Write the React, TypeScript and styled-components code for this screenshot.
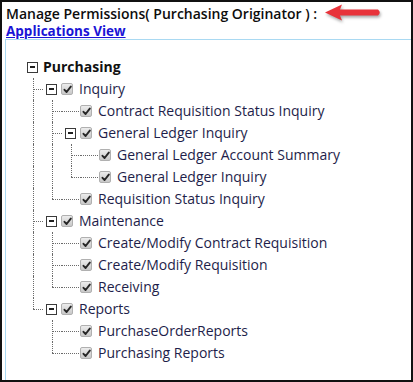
import React from "react";
import styled, { createGlobalStyle } from "styled-components";

const GlobalStyle = createGlobalStyle`
  html, body {
    margin: 0;
    padding: 0;
    background: #ffffff;
  }
  body {
    font-family: "Open Sans", "Noto Sans", Arial, sans-serif;
  }
`;

type TreeNode = {
  label: string;
  children?: TreeNode[];
};

type FlatRow = {
  node: TreeNode;
  guides: boolean[];
  connector: "tee" | "elbow" | null;
  isRoot: boolean;
};

const tree: TreeNode = {
  label: "Purchasing",
  children: [
    {
      label: "Inquiry",
      children: [
        { label: "Contract Requisition Status Inquiry" },
        {
          label: "General Ledger Inquiry",
          children: [
            { label: "General Ledger Account Summary" },
            { label: "General Ledger Inquiry" },
          ],
        },
        { label: "Requisition Status Inquiry" },
      ],
    },
    {
      label: "Maintenance",
      children: [
        { label: "Create/Modify Contract Requisition" },
        { label: "Create/Modify Requisition" },
        { label: "Receiving" },
      ],
    },
    {
      label: "Reports",
      children: [
        { label: "PurchaseOrderReports" },
        { label: "Purchasing Reports" },
      ],
    },
  ],
};

function flatten(root: TreeNode): FlatRow[] {
  const rows: FlatRow[] = [{ node: root, guides: [], connector: null, isRoot: true }];
  const walk = (node: TreeNode, guides: boolean[]) => {
    const kids = node.children ?? [];
    kids.forEach((kid, i) => {
      const last = i === kids.length - 1;
      rows.push({ node: kid, guides, connector: last ? "elbow" : "tee", isRoot: false });
      walk(kid, [...guides, !last]);
    });
  };
  walk(root, []);
  return rows;
}

const Frame = styled.div`
  width: 413px;
  height: 382px;
  box-sizing: border-box;
  border: 2px solid #111111;
  overflow: hidden;
  padding-top: 3px;
  display: flex;
  flex-direction: column;
  align-items: flex-start;
`;

const TitleRow = styled.div`
  display: flex;
  align-items: center;
  padding-left: 4px;
  height: 18px;
`;

const Title = styled.h1`
  margin: 0;
  font-size: 14px;
  font-weight: 600;
  color: #0d0d0d;
  line-height: 18px;
  white-space: nowrap;
`;

const Arrow = styled.svg`
  margin-left: 7px;
  margin-top: -2px;
  flex: none;
  filter: drop-shadow(1px 2px 1.5px rgba(0, 0, 0, 0.35));
`;

const AppLink = styled.a`
  display: block;
  margin-left: 4px;
  font-size: 13.5px;
  font-weight: 700;
  color: #1a14d6;
  text-decoration: underline;
  line-height: 16px;
  height: 16px;
`;

const Panel = styled.div`
  flex: none;
  margin-left: 3px;
  width: 440px;
  height: 400px;
  border: 1px solid #a9d9f2;
  padding: 16px 0 0 18px;
  box-sizing: border-box;
`;

const Row = styled.div`
  display: flex;
  align-items: center;
  height: 22px;
`;

const Cell = styled.span`
  position: relative;
  flex: none;
  width: 19px;
  height: 22px;
`;

const Guide = styled(Cell)<{ $line: boolean }>`
  &::before {
    content: "";
    display: ${(p) => (p.$line ? "block" : "none")};
    position: absolute;
    left: 9px;
    top: 0;
    height: 100%;
    border-left: 1px dotted #6b6b6b;
  }
`;

const Connector = styled(Cell)<{ $last: boolean }>`
  &::before {
    content: "";
    position: absolute;
    left: 9px;
    top: 0;
    height: ${(p) => (p.$last ? "11px" : "100%")};
    border-left: 1px dotted #6b6b6b;
  }
  &::after {
    content: "";
    position: absolute;
    left: 9px;
    right: 0;
    top: 11px;
    border-top: 1px dotted #6b6b6b;
  }
`;

const ExpanderSlot = styled.span`
  flex: none;
  width: 17px;
  height: 22px;
  display: flex;
  align-items: center;
`;

const Expander = styled.span`
  margin-left: 3px;
  width: 9px;
  height: 9px;
  border: 1px solid #3a3a3a;
  background: #ffffff;
  display: flex;
  align-items: center;
  justify-content: center;

  &::before {
    content: "";
    width: 5px;
    height: 2px;
    background: #1f1f1f;
  }
`;

const LeafStub = styled.span`
  position: relative;
  flex: none;
  width: 17px;
  height: 22px;

  &::after {
    content: "";
    position: absolute;
    left: 0;
    right: 0;
    top: 11px;
    border-top: 1px dotted #6b6b6b;
  }
`;

const CheckBox = styled.span`
  flex: none;
  margin-left: 1px;
  width: 10px;
  height: 10px;
  border: 1px solid #b0b0b0;
  border-radius: 2px;
  background: linear-gradient(#ececec, #c8c8c8);
  display: flex;
  align-items: center;
  justify-content: center;
`;

const Label = styled.span<{ $root: boolean }>`
  margin-left: ${(p) => (p.$root ? "2px" : "6px")};
  font-size: 14px;
  font-weight: ${(p) => (p.$root ? 700 : 400)};
  color: ${(p) => (p.$root ? "#111111" : "#1e1e4a")};
  white-space: nowrap;
  line-height: 22px;
`;

function Check() {
  return (
    <svg width="9" height="9" viewBox="0 0 9 9">
      <polyline
        points="1.5,4.8 3.6,7 7.8,1.6"
        fill="none"
        stroke="#262626"
        strokeWidth="1.9"
        strokeLinecap="round"
        strokeLinejoin="round"
      />
    </svg>
  );
}

export default function App() {
  const rows = flatten(tree);
  return (
    <>
      <GlobalStyle />
      <Frame>
        <TitleRow>
          <Title>Manage Permissions( Purchasing Originator ) :</Title>
          <Arrow width="58" height="20" viewBox="0 0 58 20">
            <path d="M1 9.5 L18 1.5 L16 6.5 L54 6.5 Q57.5 9.5 54 12.5 L16 12.5 L18 17.5 Z" fill="#e8333a" />
          </Arrow>
        </TitleRow>
        <AppLink href="#">Applications View</AppLink>
        <Panel>
          {rows.map((r, i) => {
            const hasKids = !!r.node.children?.length;
            return (
              <Row key={i}>
                {r.guides.map((g, j) => (
                  <Guide key={j} $line={g} />
                ))}
                {r.connector && <Connector $last={r.connector === "elbow"} />}
                {hasKids ? (
                  <ExpanderSlot>
                    <Expander />
                  </ExpanderSlot>
                ) : (
                  <LeafStub />
                )}
                {!r.isRoot && (
                  <CheckBox>
                    <Check />
                  </CheckBox>
                )}
                <Label $root={r.isRoot}>{r.node.label}</Label>
              </Row>
            );
          })}
        </Panel>
      </Frame>
    </>
  );
}
